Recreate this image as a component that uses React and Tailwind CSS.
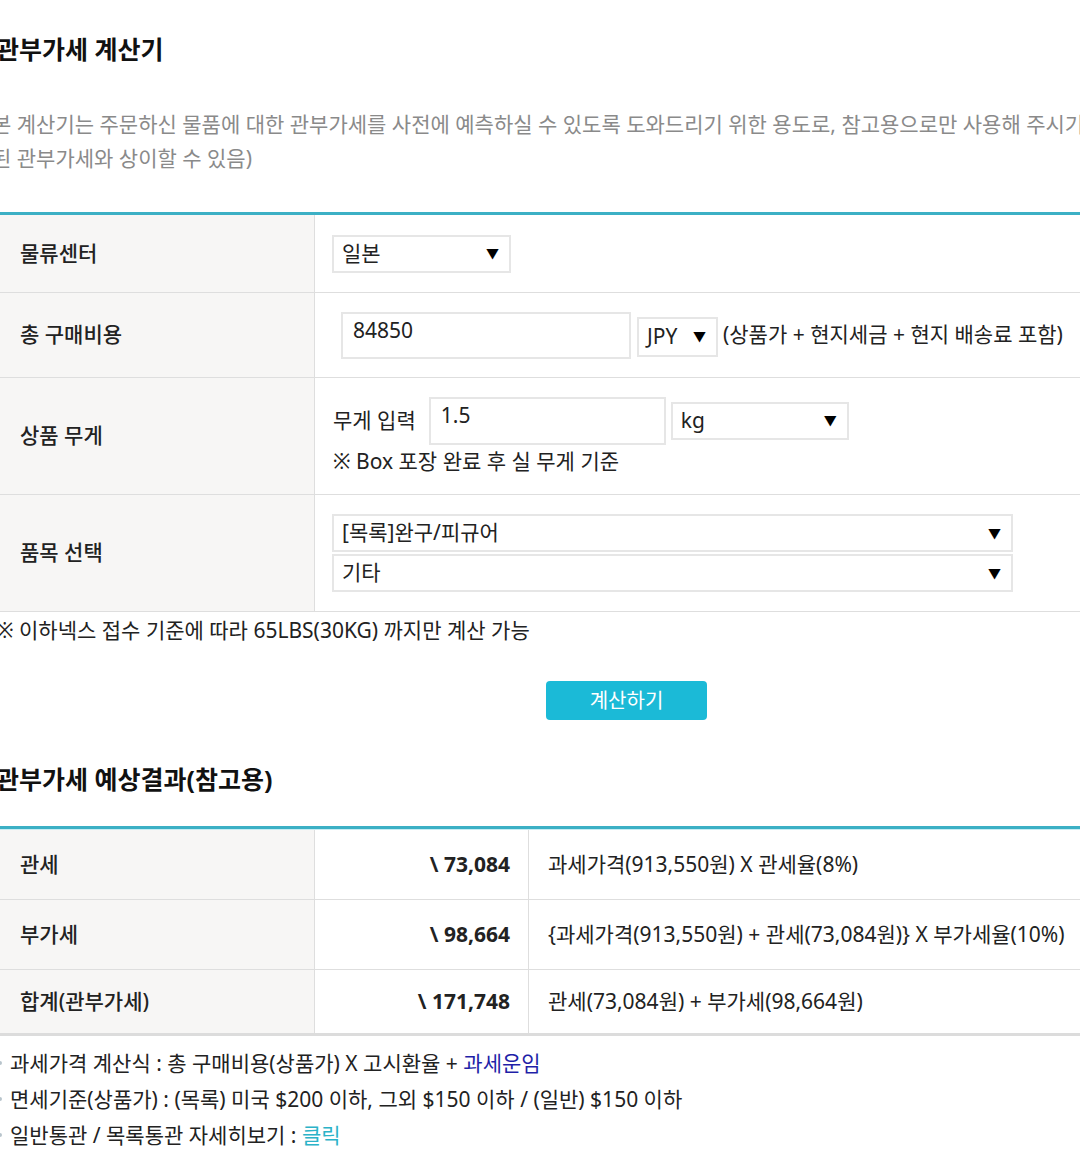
import React from 'react';

const font = { fontFamily: '"Noto Sans", "Noto Sans CJK KR", sans-serif' };

const Arrow = () => <span className="text-[13px] leading-none text-black">▼</span>;

const Select = ({ value, className }) => (
  <div className={`flex items-center justify-between border-2 border-[#e6e6e6] bg-white pl-[8px] pr-[10px] text-[21px] text-[#222] ${className}`}>
    <span>{value}</span>
    <Arrow />
  </div>
);

const InputRow = ({ label, children, height }) => (
  <div className={`flex border-b border-[#dedede] ${height}`}>
    <div className="flex w-[315px] shrink-0 items-center border-r border-[#dedede] bg-[#f7f6f5] pl-5 text-[21px] font-medium text-[#222]">
      {label}
    </div>
    <div className="flex flex-1 flex-col justify-center">{children}</div>
  </div>
);

const ResultRow = ({ label, value, formula, height, last }) => (
  <div className={`flex ${last ? 'border-b-[3px] border-[#dcdcdc]' : 'border-b border-[#dedede]'} ${height}`}>
    <div className="flex w-[315px] shrink-0 items-center border-r border-[#dedede] bg-[#f7f6f5] pl-5 text-[21px] font-medium text-[#222]">
      {label}
    </div>
    <div className="flex w-[214px] shrink-0 items-center justify-end border-r border-[#dedede] pr-[18px] text-[21px] font-bold text-[#222]">
      {value}
    </div>
    <div className="flex flex-1 items-center whitespace-nowrap pl-[19px] text-[21px] text-[#222]">{formula}</div>
  </div>
);

export default function App() {
  return (
    <div className="w-[1080px] overflow-hidden bg-white pb-[20px]" style={font}>
      <div className="-ml-[4px] w-[1200px]">
        <h1 className="pt-[32px] text-[25px] font-bold leading-[34px] text-[#111]">관부가세 계산기</h1>
        <div className="mt-[41px] whitespace-nowrap text-[21px] leading-[34px] text-[#8a8a8a]">
          <p className="-ml-[4px]">본 계산기는 주문하신 물품에 대한 관부가세를 사전에 예측하실 수 있도록 도와드리기 위한 용도로, 참고용으로만 사용해 주시기 바랍니다. (실제 부과</p>
          <p className="-ml-[4px]">된 관부가세와 상이할 수 있음)</p>
        </div>
      </div>

      <div className="mt-[37px] border-t-[3px] border-[#3cb0c5]">
        <InputRow label="물류센터" height="h-[78px]">
          <Select value="일본" className="ml-[17px] h-[38px] w-[179px]" />
        </InputRow>

        <InputRow label="총 구매비용" height="h-[85px]">
          <div className="flex items-center text-[21px] text-[#222]">
            <div className="ml-[26px] h-[47px] w-[290px] border-2 border-[#e6e6e6] pl-[10px] pt-[1px] leading-[30px]">84850</div>
            <Select value="JPY" className="ml-[6px] mt-[3px] h-[40px] w-[81px]" />
            <span className="ml-[5px] whitespace-nowrap">(상품가 + 현지세금 + 현지 배송료 포함)</span>
          </div>
        </InputRow>

        <InputRow label="상품 무게" height="h-[117px]">
          <div className="flex items-center pl-[18px] text-[21px] text-[#222]">
            <span>무게 입력</span>
            <div className="ml-[13px] h-[48px] w-[237px] border-2 border-[#e6e6e6] pl-[10px] leading-[32px]">1.5</div>
            <Select value="kg" className="ml-[5px] h-[38px] w-[178px]" />
          </div>
          <div className="mt-[1px] pl-[18px] text-[21px] leading-[30px] text-[#222]">※ Box 포장 완료 후 실 무게 기준</div>
        </InputRow>

        <InputRow label="품목 선택" height="h-[117px]">
          <div className="ml-[17px] flex w-[681px] flex-col gap-[2px]">
            <Select value="[목록]완구/피규어" className="h-[38px]" />
            <Select value="기타" className="h-[38px]" />
          </div>
        </InputRow>
      </div>

      <p className="-ml-[4px] mt-[2px] text-[21px] leading-[32px] text-[#222]">※ 이하넥스 접수 기준에 따라 65LBS(30KG) 까지만 계산 가능</p>

      <div className="mt-[35px] flex pl-[546px]">
        <button className="h-[39px] w-[161px] rounded-[4px] bg-[#1bbad7] text-[20px] text-white">계산하기</button>
      </div>

      <h2 className="-ml-[4px] mt-[42px] text-[25px] font-bold leading-[34px] text-[#111]">관부가세 예상결과(참고용)</h2>

      <div className="mt-[30px] border-t-[3px] border-[#3cb0c5]">
        <div className="h-[1px] bg-[#c8eef4]" />
        <ResultRow label="관세" value="\ 73,084" formula="과세가격(913,550원) X 관세율(8%)" height="h-[70px]" />
        <ResultRow label="부가세" value="\ 98,664" formula="{과세가격(913,550원) + 관세(73,084원)} X 부가세율(10%)" height="h-[70px]" />
        <ResultRow label="합계(관부가세)" value="\ 171,748" formula="관세(73,084원) + 부가세(98,664원)" height="h-[66px]" last />
      </div>

      <ul className="mt-[9px] text-[21px] leading-[36px] text-[#222]">
        <li className="-ml-[2px] flex items-center gap-[8px]">
          <span className="h-[4px] w-[4px] rounded-full bg-[#b8c4cc]" />
          <span>과세가격 계산식 : 총 구매비용(상품가) X 고시환율 + <span className="text-[#1f1fa8]">과세운임</span></span>
        </li>
        <li className="-ml-[2px] flex items-center gap-[8px]">
          <span className="h-[4px] w-[4px] rounded-full bg-[#b8c4cc]" />
          <span>면세기준(상품가) : (목록) 미국 $200 이하, 그외 $150 이하 / (일반) $150 이하</span>
        </li>
        <li className="-ml-[2px] flex items-center gap-[8px]">
          <span className="h-[4px] w-[4px] rounded-full bg-[#b8c4cc]" />
          <span>일반통관 / 목록통관 자세히보기 : <span className="text-[#2bb3c8]">클릭</span></span>
        </li>
      </ul>
    </div>
  );
}
